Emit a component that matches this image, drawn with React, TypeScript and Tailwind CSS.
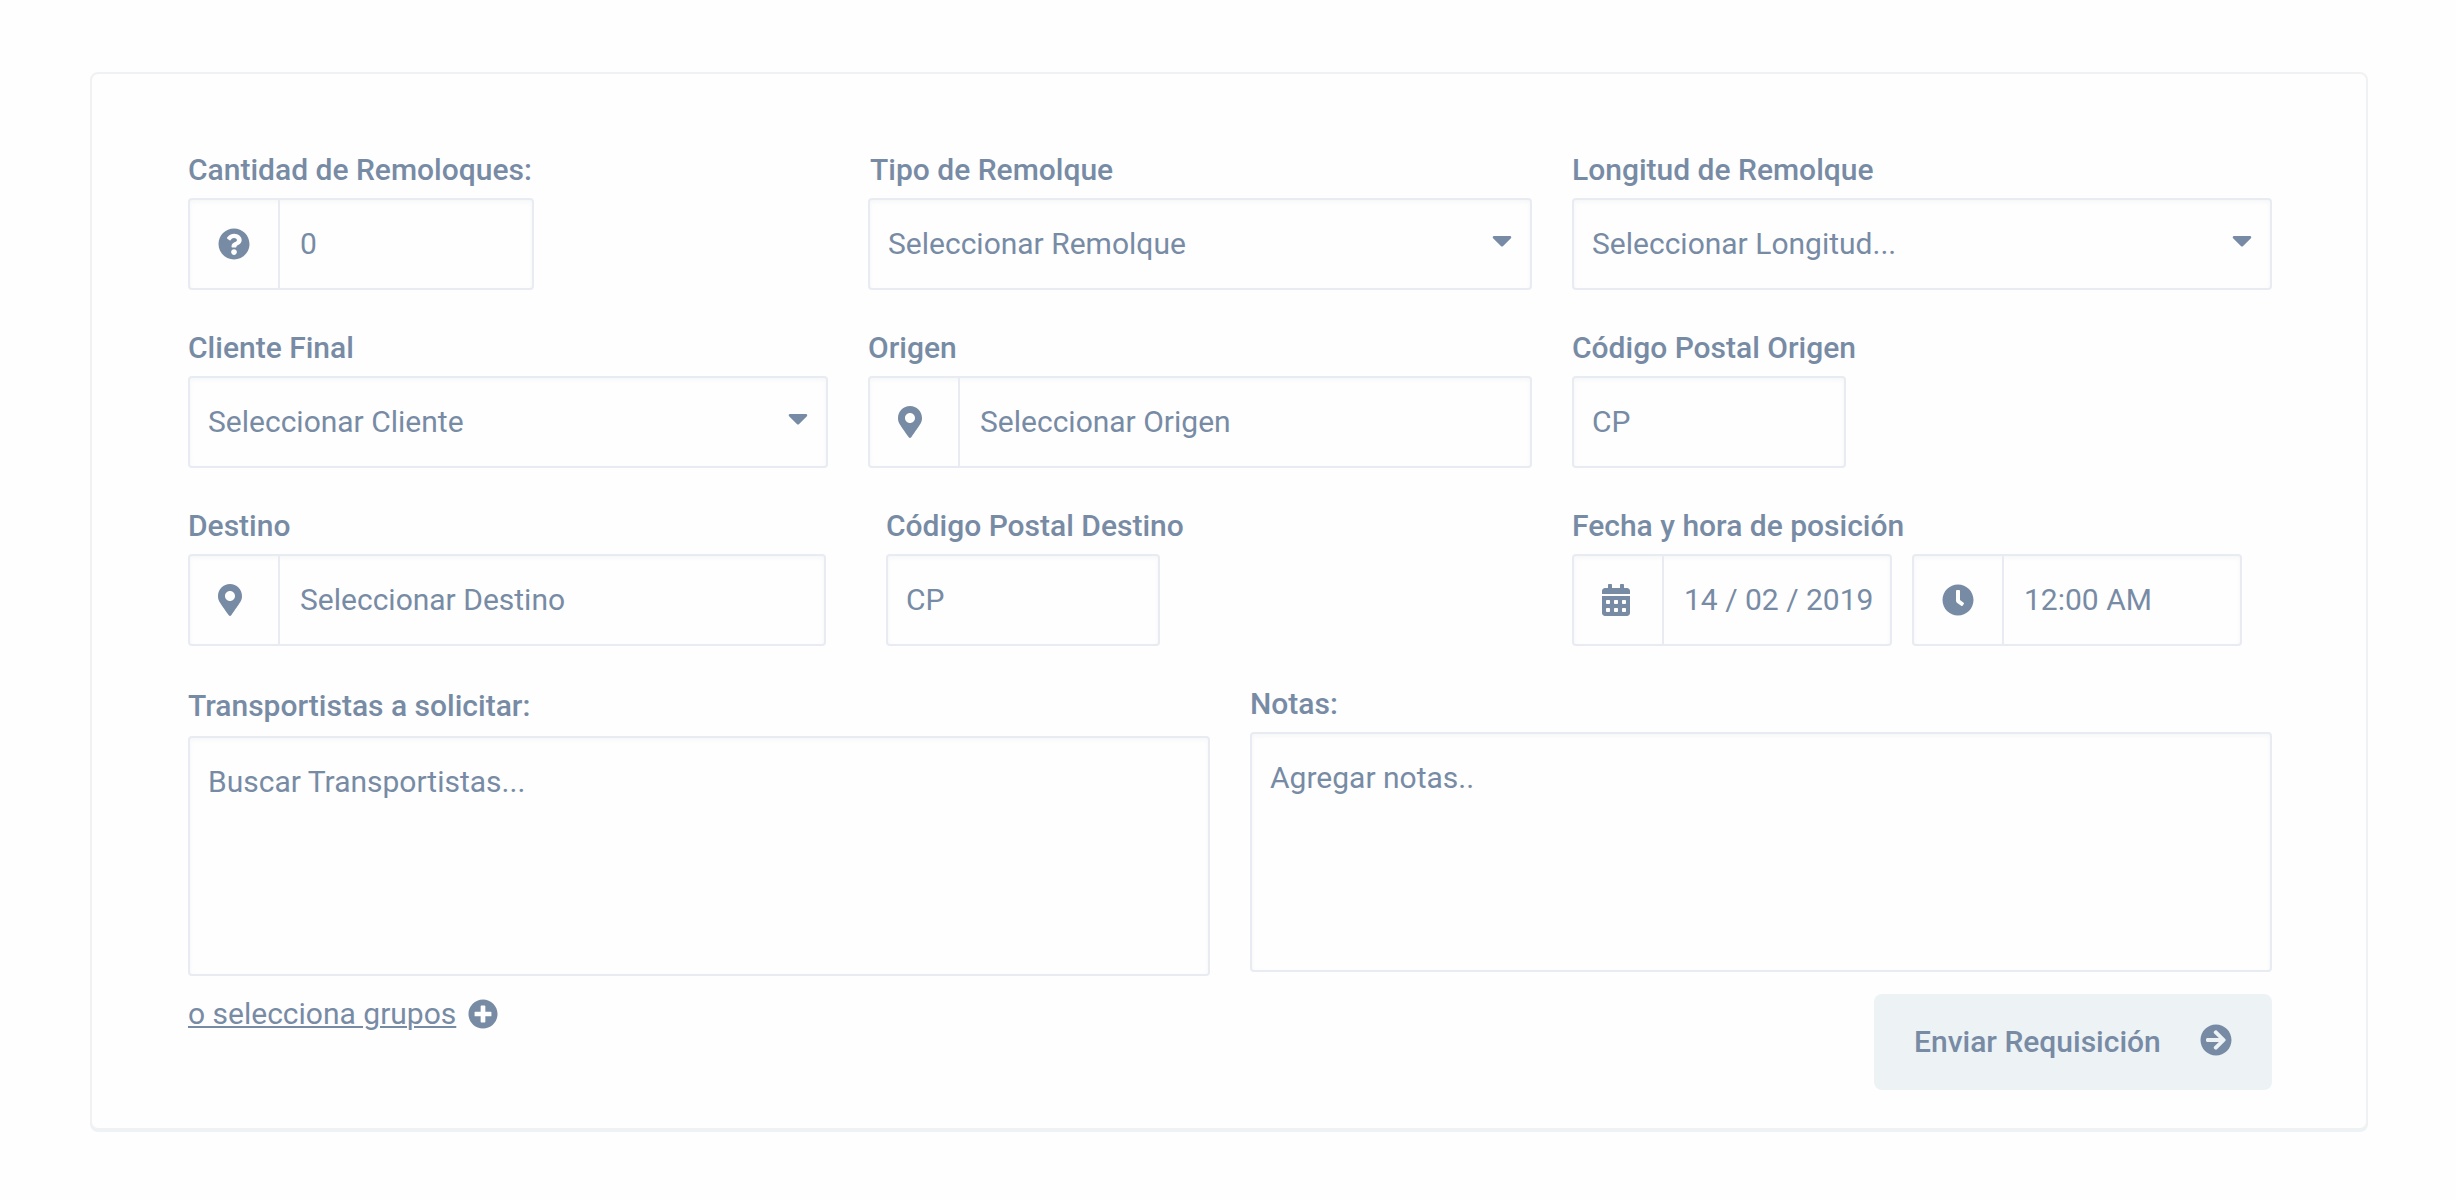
import type { ReactNode } from "react";
import {
  FaArrowCircleRight,
  FaCalendarAlt,
  FaCaretDown,
  FaClock,
  FaMapMarkerAlt,
  FaPlusCircle,
  FaQuestionCircle,
} from "react-icons/fa";

const box =
  "flex rounded-[4px] border-2 border-[#e8ebf1] bg-[#fefefe] shadow-[inset_0_2px_4px_rgba(102,119,136,0.06)]";

function Field({
  label,
  width,
  labelClass = "mb-[10px]",
  className = "",
  children,
}: {
  label: string;
  width: string;
  labelClass?: string;
  className?: string;
  children: ReactNode;
}) {
  return (
    <div className={`${width} ${className}`}>
      <div className={`h-[36px] whitespace-nowrap font-medium leading-[36px] ${labelClass}`}>{label}</div>
      {children}
    </div>
  );
}

function Input({ text, icon, width = "w-full" }: { text: string; icon?: ReactNode; width?: string }) {
  return (
    <div className={`${box} ${width} h-[92px]`}>
      {icon && <div className="flex w-[90px] items-center border-r-2 border-[#e8ebf1] pl-7 text-[32px]">{icon}</div>}
      <div className={`flex items-center whitespace-nowrap pb-[2px] ${icon ? "pl-5" : "pl-[18px]"}`}>{text}</div>
    </div>
  );
}

function Select({ text }: { text: string }) {
  return (
    <div className={`${box} h-[92px] w-full items-center justify-between pl-[18px] pr-[18px]`}>
      <span className="whitespace-nowrap pb-[2px]">{text}</span>
      <FaCaretDown className="mb-2 h-8 w-5" />
    </div>
  );
}

function TextArea({ text }: { text: string }) {
  return <div className={`${box} h-[240px] w-full pl-[18px] pt-[26px] leading-[36px]`}>{text}</div>;
}

export default function App() {
  return (
    <div className="h-[1200px] w-[2456px] bg-[#fefefe] pl-[90px] pt-[72px] font-['Roboto',sans-serif] text-[30px] text-[#788ba5]">
      <div className="h-[1058px] w-[2278px] rounded-[8px] border-2 border-[#f0f1f2] bg-[#fefefe] pl-24 pt-[78px] shadow-[0_2px_0_#edf2f5]">
        <div className="grid grid-cols-[680px_704px_700px] gap-y-10">
          <Field label="Cantidad de Remoloques:" width="w-[346px]">
            <Input icon={<FaQuestionCircle />} text="0" />
          </Field>
          <Field label="Tipo de Remolque" width="w-[664px]" labelClass="mb-[10px] pl-[2px]">
            <Select text="Seleccionar Remolque" />
          </Field>
          <Field label="Longitud de Remolque" width="w-[700px]">
            <Select text="Seleccionar Longitud..." />
          </Field>

          <Field label="Cliente Final" width="w-[640px]">
            <Select text="Seleccionar Cliente" />
          </Field>
          <Field label="Origen" width="w-[664px]">
            <Input icon={<FaMapMarkerAlt className="h-8 w-6" />} text="Seleccionar Origen" />
          </Field>
          <Field label="Código Postal Origen" width="w-[274px]">
            <Input text="CP" />
          </Field>

          <Field label="Destino" width="w-[638px]">
            <Input icon={<FaMapMarkerAlt className="h-8 w-6" />} text="Seleccionar Destino" />
          </Field>
          <Field label="Código Postal Destino" width="w-[274px]" className="ml-[18px]">
            <Input text="CP" />
          </Field>
          <Field label="Fecha y hora de posición" width="w-[700px]">
            <div className="flex gap-5">
              <Input icon={<FaCalendarAlt className="h-8 w-7" />} text="14 / 02 / 2019" width="w-[320px]" />
              <Input icon={<FaClock />} text="12:00 AM" width="w-[330px]" />
            </div>
          </Field>
        </div>

        <div className="mt-10 flex gap-10">
          <div className="w-[1022px] pt-[2px]">
            <Field label="Transportistas a solicitar:" width="w-full" labelClass="mb-3">
              <TextArea text="Buscar Transportistas..." />
            </Field>
            <div className="mt-5 flex items-center gap-3 leading-[36px]">
              <a className="underline decoration-2 underline-offset-2">o selecciona grupos</a>
              <FaPlusCircle className="text-[30px]" />
            </div>
          </div>
          <div className="w-[1022px]">
            <Field label="Notas:" width="w-full">
              <TextArea text="Agregar notas.." />
            </Field>
            <button className="ml-auto mt-[22px] flex h-24 w-[398px] items-center justify-between rounded-[8px] bg-[#edf2f5] pl-10 pr-10 font-medium">
              <span className="whitespace-nowrap pb-[2px]">Enviar Requisición</span>
              <FaArrowCircleRight className="mb-1 text-[32px]" />
            </button>
          </div>
        </div>
      </div>
    </div>
  );
}
